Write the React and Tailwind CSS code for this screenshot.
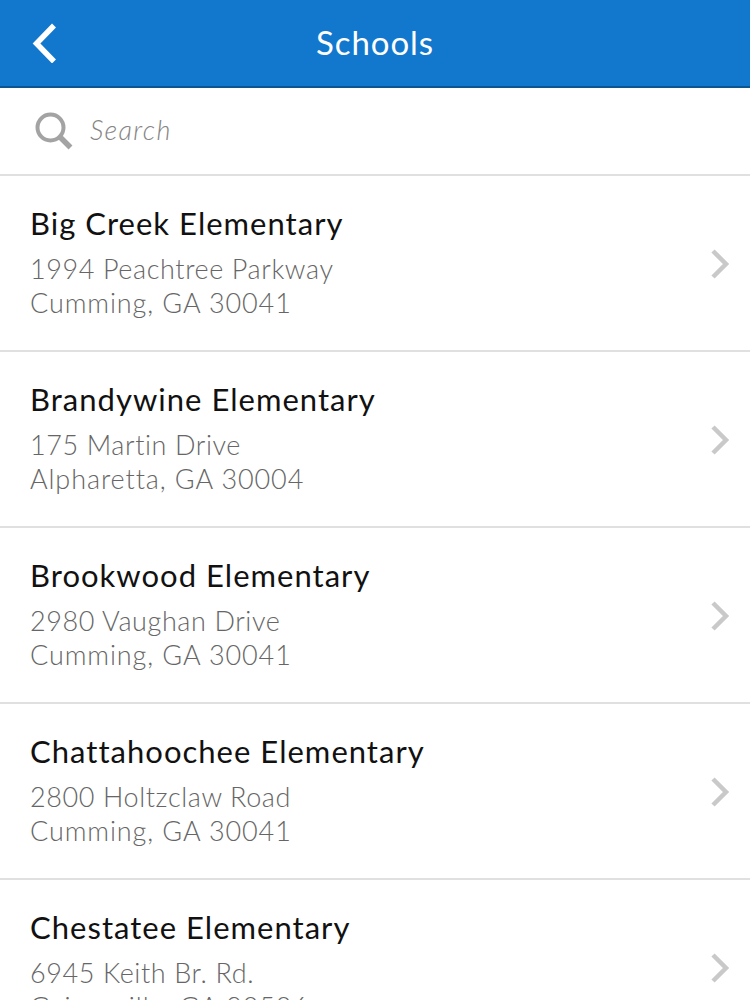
const schools = [
  { name: 'Big Creek Elementary', street: '1994 Peachtree Parkway', city: 'Cumming, GA 30041' },
  { name: 'Brandywine Elementary', street: '175 Martin Drive', city: 'Alpharetta, GA 30004' },
  { name: 'Brookwood Elementary', street: '2980 Vaughan Drive', city: 'Cumming, GA 30041' },
  { name: 'Chattahoochee Elementary', street: '2800 Holtzclaw Road', city: 'Cumming, GA 30041' },
  { name: 'Chestatee Elementary', street: '6945 Keith Br. Rd.', city: 'Gainesville, GA 30506' },
]

function Header({ title }) {
  return (
    <header className="grid h-[88px] shrink-0 grid-cols-[1fr_auto_1fr] items-center border-b-2 border-[#0b5590] bg-[#1278ce]">
      <button type="button" aria-label="Back" className="ml-8 w-6">
        <svg className="block h-10 w-6" viewBox="0 0 24 40" fill="none" stroke="white" strokeWidth="5.5">
          <path d="M22 2.5 L4.5 20.5 L22 38.5" />
        </svg>
      </button>
      <h1 className="pb-[3px] text-[33px] leading-10 tracking-[0.9px] text-white">{title}</h1>
    </header>
  )
}

function SearchBar() {
  return (
    <div className="flex h-[88px] shrink-0 items-center border-b-2 border-[#e0e0e0] pl-[35px]">
      <svg className="size-[38px]" viewBox="0 0 38 38" fill="none" stroke="#a3a3a3" aria-hidden="true">
        <circle cx="15.5" cy="15.5" r="13" strokeWidth="4" />
        <path d="M24.5 24.5 L35.5 35.5" strokeWidth="5.5" />
      </svg>
      <input
        type="text"
        placeholder="Search"
        aria-label="Search"
        className="ml-[17px] w-96 pb-0.5 text-[27px] font-light tracking-[1.3px] italic outline-none placeholder:text-[#858585]"
      />
    </div>
  )
}

function SchoolRow({ name, street, city }) {
  return (
    <li className="flex h-44 shrink-0 items-center justify-between border-b-2 border-[#e0e0e0] pr-5 pl-[30px]">
      <div className="pb-[3px]">
        <h2 className="text-[31px] leading-10 tracking-[1.02px] text-[#111]">{name}</h2>
        <p className="mt-[9px] text-[27px] leading-[34px] font-light text-[#666]">
          <span className="block tracking-[0.6px]">{street}</span>
          <span className="block tracking-[0.9px]">{city}</span>
        </p>
      </div>
      <svg className="mt-px h-8 w-5" viewBox="0 0 20 32" fill="none" stroke="#c9c9c9" strokeWidth="4.5" aria-hidden="true">
        <path d="M3 3 L16 16 L3 29" />
      </svg>
    </li>
  )
}

export default function App() {
  return (
    <div className="flex h-screen flex-col overflow-hidden bg-white font-['Lato',sans-serif]">
      <Header title="Schools" />
      <SearchBar />
      <ul>
        {schools.map((school) => (
          <SchoolRow key={school.name} {...school} />
        ))}
      </ul>
    </div>
  )
}
